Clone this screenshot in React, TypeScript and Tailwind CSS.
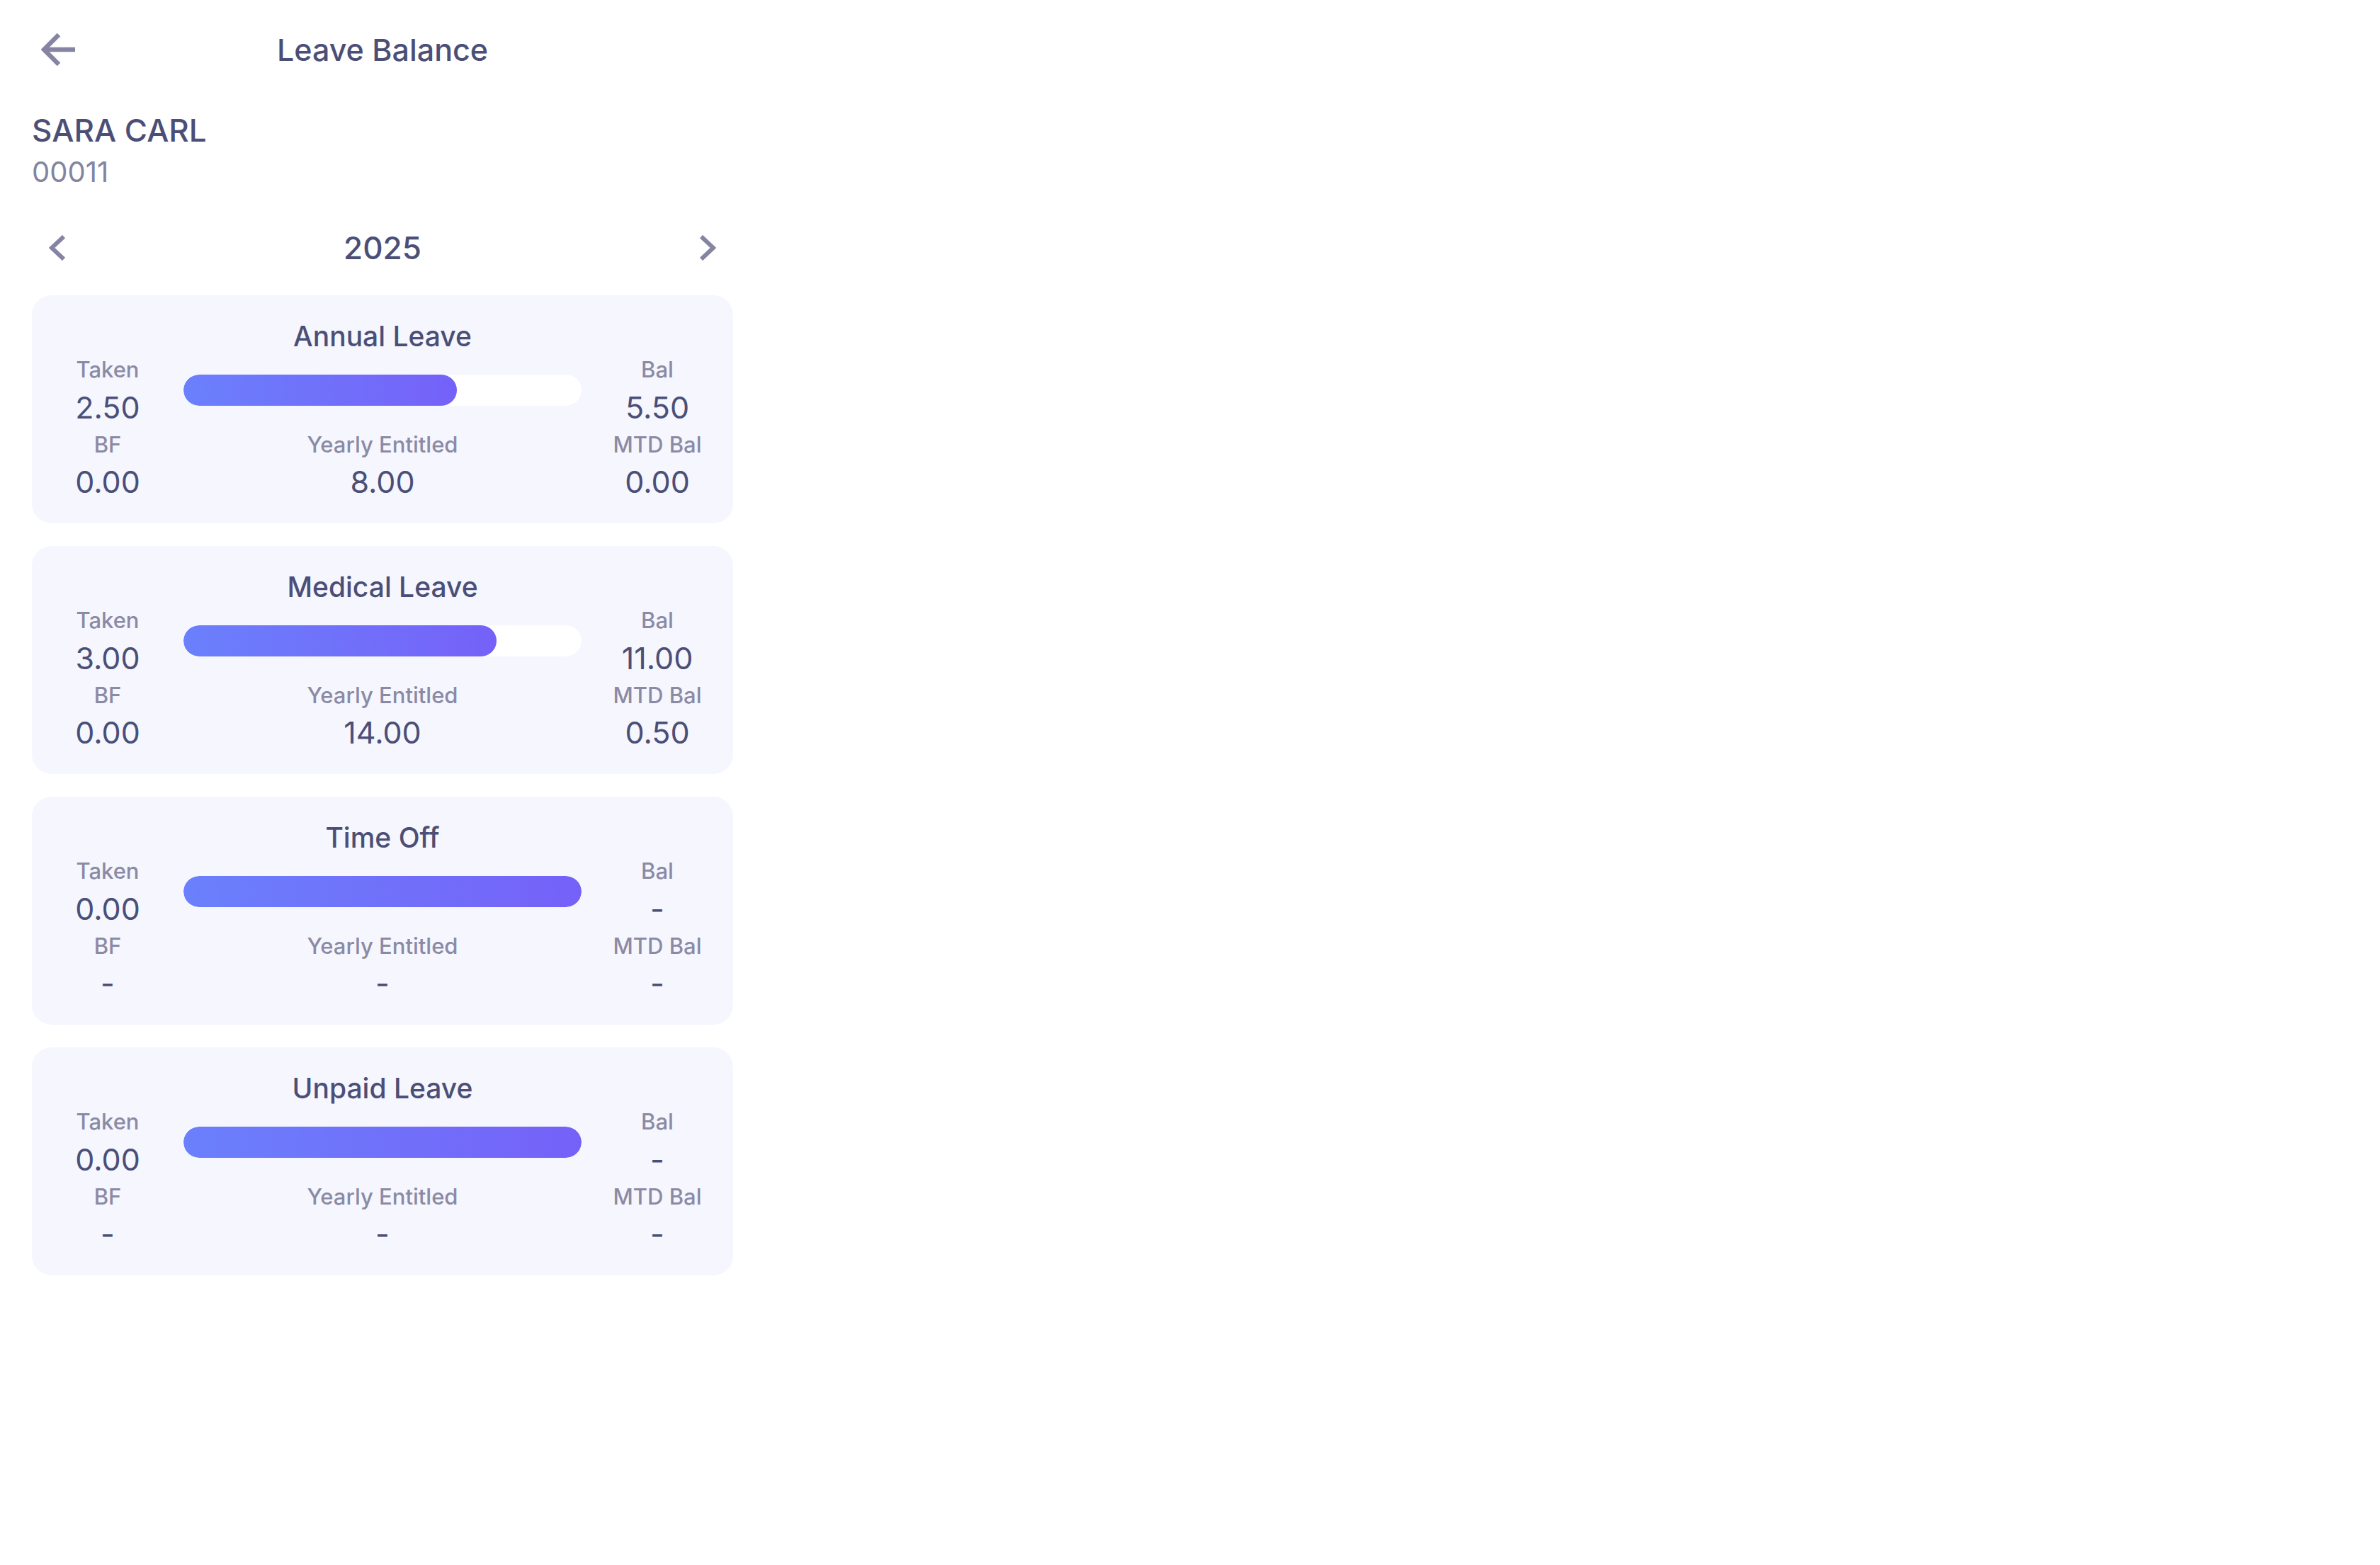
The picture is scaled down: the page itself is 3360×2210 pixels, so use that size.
import React from "react";

type Leave = {
    title: string
    taken: string
    bal: string
    bf: string
    entitled: string
    mtd: string
    fill: number
}

const leaves: Leave[] = [
    { title: "Annual Leave", taken: "2.50", bal: "5.50", bf: "0.00", entitled: "8.00", mtd: "0.00", fill: 5.5 / 8 },
    { title: "Medical Leave", taken: "3.00", bal: "11.00", bf: "0.00", entitled: "14.00", mtd: "0.50", fill: 11 / 14 },
    { title: "Time Off", taken: "0.00", bal: "-", bf: "-", entitled: "-", mtd: "-", fill: 1 },
    { title: "Unpaid Leave", taken: "0.00", bal: "-", bf: "-", entitled: "-", mtd: "-", fill: 1 },
]

function BackArrow() {
    return (
        <svg width="48" height="48" viewBox="0 0 48 48" fill="none" stroke="#8584a3" strokeWidth="6.5">
            <path d="M48 24H5" />
            <path d="M25 3L4 24L25 45" />
        </svg>
    )
}

function Chevron({ dir }: { dir: "left" | "right" }) {
    return (
        <svg width="24" height="36" viewBox="0 0 24 36" fill="none" stroke="#8584a3" strokeWidth="6" strokeLinejoin="miter">
            {dir === "left" ? <path d="M21 2L4 18L21 34" /> : <path d="M3 2L20 18L3 34" />}
        </svg>
    )
}

// label / value cells share the same look across every card
const label = "flex items-center justify-center text-[31px] font-medium text-[#8b8aa5]"
const value = "flex items-center justify-center text-[43px] text-[#4b4f77]"

function LeaveCard({ leave }: { leave: Leave }) {
    return (
        <div className="flex flex-col bg-[#f5f6fe] rounded-[28px] pt-[35px] pb-[31px]">
            <h2 className="text-center text-[39px] leading-[46px] font-medium text-[#4b4f77]">{leave.title}</h2>
            <div className="grid grid-cols-[214px_1fr_214px] grid-rows-[48px_58px_48px_56px] text-center">
                <div className={label}>Taken</div>
                <div className="row-span-2 flex items-center">
                    <div className="w-full h-[44px] rounded-full bg-white overflow-hidden">
                        <div
                            className="h-full rounded-full bg-linear-to-r from-[#6a80fc] to-[#7561f8]"
                            style={{ width: `${leave.fill * 100}%` }}
                        />
                    </div>
                </div>
                <div className={label}>Bal</div>
                <div className={value}>{leave.taken}</div>
                <div className={value}>{leave.bal}</div>
                <div className={label}>BF</div>
                <div className={label}>Yearly Entitled</div>
                <div className={label}>MTD Bal</div>
                <div className={value}>{leave.bf}</div>
                <div className={value}>{leave.entitled}</div>
                <div className={value}>{leave.mtd}</div>
            </div>
        </div>
    )
}

export default function App() {
    return (
        <div className="min-h-screen bg-white font-['Inter',sans-serif]">
            <main className="flex flex-col w-[1080px]">
                <header className="grid grid-cols-[1fr_auto_1fr] items-center h-[138px] pt-[2px]">
                    <div className="pl-[58px] flex items-center">
                        <BackArrow />
                    </div>
                    <h1 className="text-[43px] font-medium text-[#4b4f77]">Leave Balance</h1>
                    <div />
                </header>

                <div className="flex flex-col px-[45px] mt-[20px]">
                    <p className="text-[44px] leading-[52px] font-medium text-[#4b4f77]">SARA CARL</p>
                    <p className="text-[40px] leading-[48px] mt-[9px] text-[#8584a0]">00011</p>
                </div>

                <div className="flex items-center justify-between h-[70px] mt-[48px] px-[69px]">
                    <Chevron dir="left" />
                    <span className="text-[44px] font-medium text-[#4b4f77]">2025</span>
                    <Chevron dir="right" />
                </div>

                <div className="flex flex-col gap-[32px] px-[45px] mt-[32px]">
                    {leaves.map((leave) => (
                        <LeaveCard key={leave.title} leave={leave} />
                    ))}
                </div>
            </main>
        </div>
    )
}
